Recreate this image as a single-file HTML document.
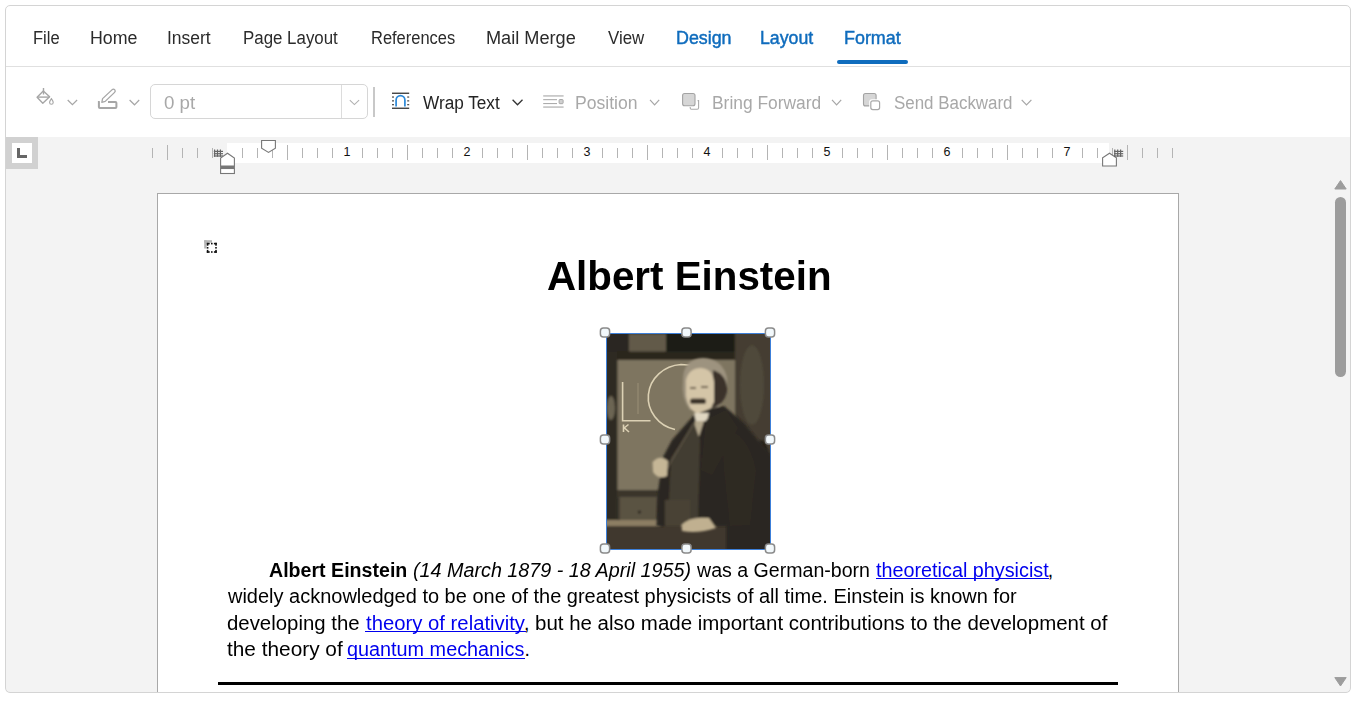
<!DOCTYPE html><html><head><meta charset="utf-8"><style>
html,body{margin:0;padding:0;width:1358px;height:701px;overflow:hidden;background:#fff;font-family:"Liberation Sans",sans-serif;}
.t{position:absolute;white-space:pre;line-height:normal;transform-origin:0 0;}
.a{position:absolute;}
</style></head><body>
<div class="a" style="left:6px;top:66px;width:1344px;height:1px;background:#e0e0e0"></div>
<div class="a" style="left:6px;top:137px;width:1344px;height:555px;background:#f3f3f3"></div>
<div class="t" style="left:32.92px;top:28px;font-size:18px;font-weight:normal;font-style:normal;color:#2b2b2b;transform:scaleX(0.9196);">File</div>
<div class="t" style="left:90.32px;top:28px;font-size:18px;font-weight:normal;font-style:normal;color:#2b2b2b;transform:scaleX(0.9880);">Home</div>
<div class="t" style="left:167.42px;top:28px;font-size:18px;font-weight:normal;font-style:normal;color:#2b2b2b;transform:scaleX(0.9711);">Insert</div>
<div class="t" style="left:243.09px;top:28px;font-size:18px;font-weight:normal;font-style:normal;color:#2b2b2b;transform:scaleX(0.9377);">Page Layout</div>
<div class="t" style="left:370.53px;top:28px;font-size:18px;font-weight:normal;font-style:normal;color:#2b2b2b;transform:scaleX(0.9146);">References</div>
<div class="t" style="left:486.19px;top:28px;font-size:18px;font-weight:normal;font-style:normal;color:#2b2b2b;transform:scaleX(1.0086);">Mail Merge</div>
<div class="t" style="left:608.28px;top:28px;font-size:18px;font-weight:normal;font-style:normal;color:#2b2b2b;transform:scaleX(0.9372);">View</div>
<div class="t" style="left:675.51px;top:28px;font-size:18px;font-weight:normal;font-style:normal;color:#0f6cbd;transform:scaleX(0.9911);-webkit-text-stroke:0.45px #0f6cbd;">Design</div>
<div class="t" style="left:760.42px;top:28px;font-size:18px;font-weight:normal;font-style:normal;color:#0f6cbd;transform:scaleX(0.9852);-webkit-text-stroke:0.45px #0f6cbd;">Layout</div>
<div class="t" style="left:843.51px;top:28px;font-size:18px;font-weight:normal;font-style:normal;color:#0f6cbd;transform:scaleX(0.9950);-webkit-text-stroke:0.45px #0f6cbd;">Format</div>
<div class="a" style="left:837px;top:60px;width:71px;height:4px;border-radius:2px;background:#0f6cbd"></div>
<svg class="a" style="left:0;top:0" width="1358" height="137" viewBox="0 0 1358 137"><line x1="43.5" y1="88" x2="43.5" y2="94.5" stroke="#a6a6a6" stroke-width="1.4"/><path d="M43.3 91 L49.6 96.8 L42.8 103.2 L37.1 97.3 Z" fill="none" stroke="#a6a6a6" stroke-width="1.4" stroke-linejoin="round"/><line x1="37.5" y1="97.1" x2="49.5" y2="97.1" stroke="#a6a6a6" stroke-width="1.4"/><path d="M51.4 98.6 Q53.4 101.5 53.2 102.5 A1.8 1.8 0 0 1 49.6 102.5 Q49.4 101.5 51.4 98.6 Z" fill="none" stroke="#a6a6a6" stroke-width="1.1"/><polyline points="67.7,100 72.4,104.7 77.1,100" fill="none" stroke="#a6a6a6" stroke-width="1.2"/><path d="M99.8 102 L98.9 102 Q98.9 102 98.9 103 L98.9 107 Q98.9 108 99.9 108 L115.4 108 Q116.4 108 116.4 107 L116.4 103 Q116.4 102 115.4 102 L108 102" fill="none" stroke="#a6a6a6" stroke-width="2"/><path d="M101.8 102.3 L102.6 98.6 L112.2 89.6 Q113.6 88.6 114.8 89.9 Q115.8 91.2 114.6 92.4 L105.2 101.4 Z" fill="none" stroke="#a6a6a6" stroke-width="1.3" stroke-linejoin="round"/><polyline points="129.6,100 134.5,104.8 139.2,100" fill="none" stroke="#a6a6a6" stroke-width="1.2"/><rect x="150.5" y="84.5" width="217" height="34" rx="4.5" fill="#fff" stroke="#d6d6d6" stroke-width="1"/><line x1="341.5" y1="85" x2="341.5" y2="118" stroke="#dcdcdc" stroke-width="1"/><polyline points="349.8,100.2 354.4,104.6 359.1,100.2" fill="none" stroke="#b0b0b0" stroke-width="1.1"/><rect x="373" y="87" width="2" height="30" fill="#c8c8c8"/><rect x="392" y="92.6" width="17.2" height="1.3" fill="#333"/><rect x="392" y="107.6" width="17.2" height="1.3" fill="#333"/><rect x="392" y="96.4" width="2" height="1.3" fill="#555"/><rect x="407.2" y="96.4" width="2" height="1.3" fill="#555"/><rect x="392" y="100.2" width="2" height="1.3" fill="#555"/><rect x="407.2" y="100.2" width="2" height="1.3" fill="#555"/><rect x="392" y="104" width="2" height="1.3" fill="#555"/><rect x="407.2" y="104" width="2" height="1.3" fill="#555"/><path d="M396.1 106.4 L396.1 100 A4.4 4.4 0 0 1 404.9 100 L404.9 106.4" fill="none" stroke="#2b88d8" stroke-width="1.7"/><polyline points="512.6,99.8 517.5,104.8 522.5,99.8" fill="none" stroke="#333" stroke-width="1.3"/><rect x="543.2" y="95" width="20.4" height="1.8" fill="#c9c9c9"/><rect x="543.2" y="99.1" width="13.8" height="1.1" fill="#acacac"/><rect x="543.2" y="103" width="13.8" height="1.1" fill="#acacac"/><rect x="559.1" y="99.5" width="4" height="4.2" rx="0.8" fill="#d0d0d0" stroke="#a8a8a8" stroke-width="1"/><rect x="543.2" y="106.2" width="20.4" height="1.8" fill="#c9c9c9"/><polyline points="650,99.8 654.6,104.8 659.2,99.8" fill="none" stroke="#a6a6a6" stroke-width="1.2"/><path d="M697.6 100.6 L698.6 100.6 Q698.6 100.6 698.6 101.6 L698.6 107.8 Q698.6 109.2 697.2 109.2 L691.4 109.2 Q690.2 109.2 690.2 108 L690.2 107" fill="none" stroke="#ababab" stroke-width="1.1"/><rect x="682.6" y="93.5" width="12.4" height="12.2" rx="2" fill="#d6d6d6" stroke="#a3a3a3" stroke-width="1.1"/><polyline points="832,99.8 836.6,104.8 841.2,99.8" fill="none" stroke="#a6a6a6" stroke-width="1.2"/><rect x="863.5" y="93.5" width="12.6" height="12.4" rx="2" fill="#d6d6d6" stroke="#a3a3a3" stroke-width="1.1"/><rect x="869.2" y="99.2" width="12" height="11.8" rx="2.6" fill="#fff"/><rect x="870.8" y="100.8" width="8.8" height="8.8" rx="2" fill="#fff" stroke="#a8a8a8" stroke-width="1.2"/><polyline points="1021.7,99.8 1026.5,104.8 1031.4,99.8" fill="none" stroke="#a6a6a6" stroke-width="1.2"/></svg>
<div class="t" style="left:163.92px;top:93px;font-size:18px;font-weight:normal;font-style:normal;color:#a8a8a8;transform:scaleX(1.0403);">0 pt</div>
<div class="t" style="left:423.38px;top:93px;font-size:18px;font-weight:normal;font-style:normal;color:#242424;transform:scaleX(0.9548);">Wrap Text</div>
<div class="t" style="left:575.23px;top:93px;font-size:18px;font-weight:normal;font-style:normal;color:#a8a8a8;transform:scaleX(0.9776);">Position</div>
<div class="t" style="left:712.25px;top:93px;font-size:18px;font-weight:normal;font-style:normal;color:#a8a8a8;transform:scaleX(0.9658);">Bring Forward</div>
<div class="t" style="left:893.68px;top:93px;font-size:18px;font-weight:normal;font-style:normal;color:#a8a8a8;transform:scaleX(0.9402);">Send Backward</div>
<div class="a" style="left:6px;top:137px;width:32px;height:32px;background:#d1d1d1"></div>
<div class="a" style="left:12px;top:143px;width:20px;height:20px;background:#fff"></div>
<div class="a" style="left:17px;top:148px;width:2.6px;height:10px;background:#666"></div>
<div class="a" style="left:17px;top:155.3px;width:10px;height:2.7px;background:#666"></div>
<div class="a" style="left:227px;top:143px;width:882px;height:20px;background:#fff"></div>
<svg class="a" style="left:0;top:0" width="1358" height="200" viewBox="0 0 1358 200"><rect x="152" y="148" width="1" height="10" fill="#b4b4b4"/><rect x="167" y="145" width="1" height="15" fill="#b4b4b4"/><rect x="182" y="148" width="1" height="10" fill="#b4b4b4"/><rect x="197" y="148" width="1" height="10" fill="#b4b4b4"/><rect x="212" y="148" width="1" height="10" fill="#b4b4b4"/><rect x="242" y="148" width="1" height="10" fill="#b4b4b4"/><rect x="257" y="148" width="1" height="10" fill="#b4b4b4"/><rect x="272" y="148" width="1" height="10" fill="#b4b4b4"/><rect x="287" y="145" width="1" height="15" fill="#b4b4b4"/><rect x="302" y="148" width="1" height="10" fill="#b4b4b4"/><rect x="317" y="148" width="1" height="10" fill="#b4b4b4"/><rect x="332" y="148" width="1" height="10" fill="#b4b4b4"/><rect x="362" y="148" width="1" height="10" fill="#b4b4b4"/><rect x="377" y="148" width="1" height="10" fill="#b4b4b4"/><rect x="392" y="148" width="1" height="10" fill="#b4b4b4"/><rect x="407" y="145" width="1" height="15" fill="#b4b4b4"/><rect x="422" y="148" width="1" height="10" fill="#b4b4b4"/><rect x="437" y="148" width="1" height="10" fill="#b4b4b4"/><rect x="452" y="148" width="1" height="10" fill="#b4b4b4"/><rect x="482" y="148" width="1" height="10" fill="#b4b4b4"/><rect x="497" y="148" width="1" height="10" fill="#b4b4b4"/><rect x="512" y="148" width="1" height="10" fill="#b4b4b4"/><rect x="527" y="145" width="1" height="15" fill="#b4b4b4"/><rect x="542" y="148" width="1" height="10" fill="#b4b4b4"/><rect x="557" y="148" width="1" height="10" fill="#b4b4b4"/><rect x="572" y="148" width="1" height="10" fill="#b4b4b4"/><rect x="602" y="148" width="1" height="10" fill="#b4b4b4"/><rect x="617" y="148" width="1" height="10" fill="#b4b4b4"/><rect x="632" y="148" width="1" height="10" fill="#b4b4b4"/><rect x="647" y="145" width="1" height="15" fill="#b4b4b4"/><rect x="662" y="148" width="1" height="10" fill="#b4b4b4"/><rect x="677" y="148" width="1" height="10" fill="#b4b4b4"/><rect x="692" y="148" width="1" height="10" fill="#b4b4b4"/><rect x="722" y="148" width="1" height="10" fill="#b4b4b4"/><rect x="737" y="148" width="1" height="10" fill="#b4b4b4"/><rect x="752" y="148" width="1" height="10" fill="#b4b4b4"/><rect x="767" y="145" width="1" height="15" fill="#b4b4b4"/><rect x="782" y="148" width="1" height="10" fill="#b4b4b4"/><rect x="797" y="148" width="1" height="10" fill="#b4b4b4"/><rect x="812" y="148" width="1" height="10" fill="#b4b4b4"/><rect x="842" y="148" width="1" height="10" fill="#b4b4b4"/><rect x="857" y="148" width="1" height="10" fill="#b4b4b4"/><rect x="872" y="148" width="1" height="10" fill="#b4b4b4"/><rect x="887" y="145" width="1" height="15" fill="#b4b4b4"/><rect x="902" y="148" width="1" height="10" fill="#b4b4b4"/><rect x="917" y="148" width="1" height="10" fill="#b4b4b4"/><rect x="932" y="148" width="1" height="10" fill="#b4b4b4"/><rect x="962" y="148" width="1" height="10" fill="#b4b4b4"/><rect x="977" y="148" width="1" height="10" fill="#b4b4b4"/><rect x="992" y="148" width="1" height="10" fill="#b4b4b4"/><rect x="1007" y="145" width="1" height="15" fill="#b4b4b4"/><rect x="1022" y="148" width="1" height="10" fill="#b4b4b4"/><rect x="1037" y="148" width="1" height="10" fill="#b4b4b4"/><rect x="1052" y="148" width="1" height="10" fill="#b4b4b4"/><rect x="1082" y="148" width="1" height="10" fill="#b4b4b4"/><rect x="1097" y="148" width="1" height="10" fill="#b4b4b4"/><rect x="1112" y="148" width="1" height="10" fill="#b4b4b4"/><rect x="1127" y="145" width="1" height="15" fill="#b4b4b4"/><rect x="1142" y="148" width="1" height="10" fill="#b4b4b4"/><rect x="1157" y="148" width="1" height="10" fill="#b4b4b4"/><rect x="1172" y="148" width="1" height="10" fill="#b4b4b4"/></svg>
<div class="t" style="left:337px;top:145px;width:20px;text-align:center;font-size:12.5px;color:#111">1</div>
<div class="t" style="left:457px;top:145px;width:20px;text-align:center;font-size:12.5px;color:#111">2</div>
<div class="t" style="left:577px;top:145px;width:20px;text-align:center;font-size:12.5px;color:#111">3</div>
<div class="t" style="left:697px;top:145px;width:20px;text-align:center;font-size:12.5px;color:#111">4</div>
<div class="t" style="left:817px;top:145px;width:20px;text-align:center;font-size:12.5px;color:#111">5</div>
<div class="t" style="left:937px;top:145px;width:20px;text-align:center;font-size:12.5px;color:#111">6</div>
<div class="t" style="left:1057px;top:145px;width:20px;text-align:center;font-size:12.5px;color:#111">7</div>
<svg class="a" style="left:0;top:0" width="1358" height="200" viewBox="0 0 1358 200"><rect x="214.0" y="149.5" width="1.2" height="7.3" fill="#666"/><rect x="216.9" y="149.5" width="1.2" height="7.3" fill="#666"/><rect x="219.8" y="149.5" width="1.2" height="7.3" fill="#666"/><rect x="213.8" y="150.8" width="9.2" height="1.2" fill="#666"/><rect x="213.8" y="153.10000000000002" width="9.2" height="1.2" fill="#666"/><rect x="213.8" y="155.4" width="9.2" height="1.2" fill="#666"/><path d="M261.6 140.5 L275.4 140.5 L275.4 148.3 L268.5 152.4 L261.6 148.3 Z" fill="#fff" stroke="#777" stroke-width="1.1"/><path d="M220.6 166 L220.6 158 L227.5 153.2 L234.4 158 L234.4 166 Z" fill="#fff" stroke="#777" stroke-width="1.1"/><rect x="220.1" y="166" width="14.8" height="2.5" fill="#777"/><rect x="220.6" y="168.5" width="13.8" height="5" fill="#fff" stroke="#777" stroke-width="1.1"/><path d="M1102.6 166 L1102.6 157.8 L1109.5 153.2 L1116.4 157.8 L1116.4 166 Z" fill="#fff" stroke="#777" stroke-width="1.1"/><rect x="1114.2" y="149.5" width="1.2" height="7.3" fill="#666"/><rect x="1117.1000000000001" y="149.5" width="1.2" height="7.3" fill="#666"/><rect x="1120.0" y="149.5" width="1.2" height="7.3" fill="#666"/><rect x="1114" y="150.8" width="9.2" height="1.2" fill="#666"/><rect x="1114" y="153.10000000000002" width="9.2" height="1.2" fill="#666"/><rect x="1114" y="155.4" width="9.2" height="1.2" fill="#666"/></svg>
<div class="a" style="left:157px;top:193px;width:1020px;height:498px;border:1px solid #a8a8a8;border-bottom:none;background:#fff"></div>
<svg class="a" style="left:0;top:0" width="1358" height="701" viewBox="0 0 1358 701"><path d="M1340.5 180.6 L1346.2 189 L1334.8 189 Z" fill="#9c9c9c" stroke="#9c9c9c" stroke-width="1" stroke-linejoin="round"/><rect x="1335" y="197" width="11" height="180" rx="5.5" fill="#9c9c9c"/><path d="M1340.5 686 L1346.2 677.6 L1334.8 677.6 Z" fill="#9c9c9c" stroke="#9c9c9c" stroke-width="1" stroke-linejoin="round"/></svg>
<div class="t" style="left:546.52px;top:253px;font-size:41px;font-weight:bold;font-style:normal;color:#000;transform:scaleX(0.9834);">Albert Einstein</div>
<svg class="a" style="left:0;top:0" width="1358" height="701" viewBox="0 0 1358 701"><rect x="204.2" y="240.2" width="7.8" height="2.4" fill="#b4b4b4"/><rect x="204.2" y="240.2" width="2.4" height="8.3" fill="#b4b4b4"/><rect x="206.8" y="242.8" width="2.9" height="1.6" fill="#111"/><rect x="206.8" y="251.20000000000002" width="2.9" height="1.6" fill="#111"/><rect x="206.8" y="242.8" width="1.6" height="2.9" fill="#111"/><rect x="215.20000000000002" y="242.8" width="1.6" height="2.9" fill="#111"/><rect x="211.0" y="242.8" width="1.5999999999999996" height="1.6" fill="#111"/><rect x="211.0" y="251.20000000000002" width="1.5999999999999996" height="1.6" fill="#111"/><rect x="206.8" y="247.0" width="1.6" height="1.5999999999999996" fill="#111"/><rect x="215.20000000000002" y="247.0" width="1.6" height="1.5999999999999996" fill="#111"/><rect x="213.9" y="242.8" width="2.9000000000000004" height="1.6" fill="#111"/><rect x="213.9" y="251.20000000000002" width="2.9000000000000004" height="1.6" fill="#111"/><rect x="206.8" y="249.9" width="1.6" height="2.9000000000000004" fill="#111"/><rect x="215.20000000000002" y="249.9" width="1.6" height="2.9000000000000004" fill="#111"/></svg>

<svg class="a" style="left:0;top:0" width="1358" height="701" viewBox="0 0 1358 701">
<defs><filter id="bl" x="-10%" y="-10%" width="120%" height="120%"><feGaussianBlur stdDeviation="1.3"/></filter>
<filter id="bl2" x="-10%" y="-10%" width="120%" height="120%"><feGaussianBlur stdDeviation="0.6"/></filter>
<clipPath id="pc"><rect x="607" y="334" width="164" height="215"/></clipPath></defs>
<g clip-path="url(#pc)">
<rect x="600" y="330" width="180" height="225" fill="#3a342a"/>
<g filter="url(#bl)">
  <rect x="600" y="330" width="30" height="25" fill="#2c2821"/>
  <rect x="629" y="334" width="37" height="18" fill="#625a4a"/>
  <rect x="666" y="330" width="70" height="23" fill="#1e1b16"/>
  <rect x="735" y="330" width="40" height="225" fill="#443d31"/>
  <ellipse cx="752" cy="385" rx="12" ry="40" fill="#4f483b"/>
  <ellipse cx="762" cy="470" rx="8" ry="30" fill="#2a251d"/>
  <rect x="600" y="352" width="17.5" height="200" fill="#2e2a23"/>
  <ellipse cx="611" cy="408" rx="4" ry="12" fill="#6c6553"/>
  <rect x="617" y="351.5" width="118" height="9" fill="#2a261e"/>
  <rect x="617.5" y="360" width="117.5" height="131" fill="#7e7460"/>
  <rect x="617" y="490" width="45" height="8" fill="#3a342a"/>
  <rect x="619.5" y="497" width="38" height="23" fill="#5a5243"/>
  <circle cx="639.4" cy="512" r="1.6" fill="#2a261e"/>
  <rect x="600" y="520" width="60" height="7" fill="#8c7e63"/>
  <rect x="600" y="526" width="130" height="30" fill="#3f392e"/>
  <rect x="727" y="488" width="50" height="70" fill="#25211a"/>
</g>
<g filter="url(#bl2)" fill="none" stroke="#dcd1b4" stroke-width="1.6">
  <path d="M675 429.5 A35 33 0 0 1 681 364.5 L700 366"/>
  <path d="M622.6 382 L622.6 420.7 L650.5 420.7"/>
  <path d="M638 383 L638 414" stroke="#9a8f76" stroke-width="1"/>
  <path d="M623.5 424.5 L623.5 432 M623.5 428.5 L628.5 424.5 M624.5 428 L629 432"/>
</g>
<g filter="url(#bl)">
  <path d="M683 380 Q683 359 703 358 Q723 359 727 378 Q729 395 718 408 L690 410 Q681 398 683 380 Z" fill="#9d937f"/>
  <path d="M713 370 Q728 375 727 392 Q724 405 712 408 Z" fill="#3a3329"/>
  <path d="M686 380 Q689 368 701 368 Q713 369 714 382 L714 402 Q709 414 698 414 Q688 410 686 396 Z" fill="#d4c5a7"/>
  <rect x="690" y="398.5" width="16" height="5.5" rx="2.5" fill="#3d352a"/>
  <rect x="690" y="387" width="6" height="2" fill="#6a5e4a"/>
  <rect x="701" y="386" width="7" height="2" fill="#6a5e4a"/>
  <path d="M694 415 L672 440 L663 457 L658 491 L656.5 526 L727 526 L727 556 L776 556 L776 460 L758 440 L744 423 L724 406 L712 408 Z" fill="#2c2720"/>
  <path d="M722 428 Q748 432 756 470 L750 525 L730 526 L724 470 Z" fill="#2f2a23"/>
  <path d="M694 413 L709 413 L707 421 L696 422 Z" fill="#e0d7c2"/>
  <path d="M695 421 L704 421 L697 443 L692 441 Z" fill="#b3a78d"/>
  <path d="M671 458 L694 423 L700 440 L698 520 L668 520 Z" fill="#433c31"/><path d="M694 423 L666 470" stroke="#5a5244" stroke-width="1.5"/><path d="M706 420 L726 410 L738 428 L712 475 L701 470 Z" fill="#2f2a22"/>
  <path d="M665 500 L690 500 L690 526 L665 526 Z" fill="#4a4336"/>
  <path d="M652.5 462 Q660 454 668 461 L667 476 Q658 480 653 472 Z" fill="#c5b696"/>
  <path d="M681.5 525 Q690 516 709 518 L716 528 Q698 534 682 531 Z" fill="#c0b090"/>
</g>
</g>
<rect x="606.5" y="333.5" width="164" height="216" fill="none" stroke="#3c7fd9" stroke-width="1"/>
<rect x="600.4" y="327.9" width="9.2" height="9.2" rx="3" fill="#f2f8fb" stroke="#8a8a8a" stroke-width="1.5"/><rect x="600.4" y="434.9" width="9.2" height="9.2" rx="3" fill="#f2f8fb" stroke="#8a8a8a" stroke-width="1.5"/><rect x="600.4" y="543.9" width="9.2" height="9.2" rx="3" fill="#f2f8fb" stroke="#8a8a8a" stroke-width="1.5"/><rect x="681.9" y="327.9" width="9.2" height="9.2" rx="3" fill="#f2f8fb" stroke="#8a8a8a" stroke-width="1.5"/><rect x="681.9" y="543.9" width="9.2" height="9.2" rx="3" fill="#f2f8fb" stroke="#8a8a8a" stroke-width="1.5"/><rect x="765.4" y="327.9" width="9.2" height="9.2" rx="3" fill="#f2f8fb" stroke="#8a8a8a" stroke-width="1.5"/><rect x="765.4" y="434.9" width="9.2" height="9.2" rx="3" fill="#f2f8fb" stroke="#8a8a8a" stroke-width="1.5"/><rect x="765.4" y="543.9" width="9.2" height="9.2" rx="3" fill="#f2f8fb" stroke="#8a8a8a" stroke-width="1.5"/></svg>
<div class="t" style="left:268.90px;top:559px;font-size:19.5px;font-weight:bold;font-style:normal;color:#000;transform:scaleX(1.0051);">Albert Einstein</div>
<div class="t" style="left:412.51px;top:559px;font-size:19.5px;font-weight:normal;font-style:italic;color:#000;transform:scaleX(1.0124);">(14 March 1879 - 18 April 1955)</div>
<div class="t" style="left:697.00px;top:559px;font-size:19.5px;font-weight:normal;font-style:normal;color:#000;transform:scaleX(1.0039);">was a German-born</div>
<div class="t" style="left:876.05px;top:559px;font-size:19.5px;font-weight:normal;font-style:normal;color:#0000ee;transform:scaleX(1.0150);">theoretical physicist</div>
<div class="t" style="left:1047.75px;top:559px;font-size:19.5px;font-weight:normal;font-style:normal;color:#000;transform:scaleX(1.0000);">,</div>
<div class="t" style="left:227.70px;top:585px;font-size:19.5px;font-weight:normal;font-style:normal;color:#000;transform:scaleX(1.0248);">widely acknowledged to be one of the greatest physicists of all time. Einstein is known for</div>
<div class="t" style="left:226.92px;top:612px;font-size:19.5px;font-weight:normal;font-style:normal;color:#000;transform:scaleX(1.0451);">developing the</div>
<div class="t" style="left:365.64px;top:612px;font-size:19.5px;font-weight:normal;font-style:normal;color:#0000ee;transform:scaleX(1.0405);">theory of relativity</div>
<div class="t" style="left:524.05px;top:612px;font-size:19.5px;font-weight:normal;font-style:normal;color:#000;transform:scaleX(1.0000);">,</div>
<div class="t" style="left:535.49px;top:612px;font-size:19.5px;font-weight:normal;font-style:normal;color:#000;transform:scaleX(1.0498);">but he also made important contributions to the development of</div>
<div class="t" style="left:227.43px;top:638px;font-size:19.5px;font-weight:normal;font-style:normal;color:#000;transform:scaleX(1.0670);">the theory of</div>
<div class="t" style="left:347.34px;top:638px;font-size:19.5px;font-weight:normal;font-style:normal;color:#0000ee;transform:scaleX(1.0162);">quantum mechanics</div>
<div class="t" style="left:524.55px;top:638px;font-size:19.5px;font-weight:normal;font-style:normal;color:#000;transform:scaleX(1.0000);">.</div>
<div class="a" style="left:875.5px;top:578px;width:173.5px;height:1px;background:#0000ee"></div>
<div class="a" style="left:365px;top:631px;width:160.5px;height:1px;background:#0000ee"></div>
<div class="a" style="left:347.3px;top:658px;width:177.4px;height:1px;background:#0000ee"></div>
<div class="a" style="left:218px;top:682px;width:900px;height:3px;background:#000"></div>
<div class="a" style="left:5px;top:5px;width:1344px;height:686px;border:1px solid #d4d4d4;border-radius:5px;"></div>
</body></html>
